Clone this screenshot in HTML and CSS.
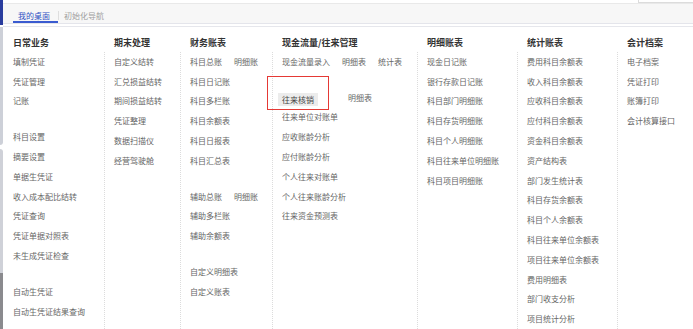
FILE: index.html
```html
<!DOCTYPE html>
<html lang="zh-CN">

<head>
    <meta charset="UTF-8">
    <meta name="viewport" content="width=device-width, initial-scale=1.0">
    <title>我的桌面</title>
    <link rel="stylesheet" href="styles.css">
</head>

<body>
    <div class="page">
        <div class="rail">
            <span class="rail-top"></span>
            <span class="rail-thumb"></span>
            <span class="rail-track"></span>
            <span class="rail-end"></span>
        </div>

        <div class="main">
            <div class="topbar">
                <div class="corner"></div>
            </div>

            <div class="tabs">
                <a class="tab active">我的桌面</a>
                <a class="tab">初始化导航</a>
            </div>
            <div class="rule"></div>

            <div class="board">
                <div class="col first">
                    <h3>日常业务</h3>
                    <div class="list">
                        <div class="group">
                            <a>填制凭证</a>
                            <a>凭证管理</a>
                            <a>记账</a>
                        </div>
                        <div class="group">
                            <a>科目设置</a>
                            <a>摘要设置</a>
                            <a>单据生凭证</a>
                            <a>收入成本配比结转</a>
                            <a>凭证查询</a>
                            <a>凭证单据对照表</a>
                            <a>未生成凭证检查</a>
                        </div>
                        <div class="group">
                            <a>自动生凭证</a>
                            <a>自动生凭证结果查询</a>
                        </div>
                    </div>
                </div>

                <div class="col">
                    <h3>期末处理</h3>
                    <div class="list">
                        <div class="group">
                            <a>自定义结转</a>
                            <a>汇兑损益结转</a>
                            <a>期间损益结转</a>
                            <a>凭证整理</a>
                            <a>数据扫描仪</a>
                            <a>经营驾驶舱</a>
                        </div>
                    </div>
                </div>

                <div class="col">
                    <h3>财务账表</h3>
                    <div class="list">
                        <div class="group">
                            <div class="row"><a>科目总账</a><a>明细账</a></div>
                            <a>科目日记账</a>
                            <a>科目多栏账</a>
                            <a>科目余额表</a>
                            <a>科目日报表</a>
                            <a>科目汇总表</a>
                        </div>
                        <div class="group">
                            <div class="row"><a>辅助总账</a><a>明细账</a></div>
                            <a>辅助多栏账</a>
                            <a>辅助余额表</a>
                        </div>
                        <div class="group">
                            <a>自定义明细表</a>
                            <a>自定义账表</a>
                        </div>
                    </div>
                </div>

                <div class="col">
                    <h3>现金流量/往来管理</h3>
                    <div class="list">
                        <div class="group">
                            <div class="row"><a>现金流量录入</a><a>明细表</a><a>统计表</a></div>
                        </div>
                        <div class="group">
                            <div class="row"><a class="hl">往来核销</a><a>明细表</a></div>
                            <a>往来单位对账单</a>
                            <a>应收账龄分析</a>
                            <a>应付账龄分析</a>
                            <a>个人往来对账单</a>
                            <a>个人往来账龄分析</a>
                            <a>往来资金预测表</a>
                        </div>
                    </div>
                </div>

                <div class="col">
                    <h3>明细账表</h3>
                    <div class="list">
                        <div class="group">
                            <a>现金日记账</a>
                            <a>银行存款日记账</a>
                            <a>科目部门明细账</a>
                            <a>科目存货明细账</a>
                            <a>科目个人明细账</a>
                            <a>科目往来单位明细账</a>
                            <a>科目项目明细账</a>
                        </div>
                    </div>
                </div>

                <div class="col">
                    <h3>统计账表</h3>
                    <div class="list">
                        <div class="group">
                            <a>费用科目余额表</a>
                            <a>收入科目余额表</a>
                            <a>应收科目余额表</a>
                            <a>应付科目余额表</a>
                            <a>资金科目余额表</a>
                            <a>资产结构表</a>
                            <a>部门发生统计表</a>
                            <a>科目存货余额表</a>
                            <a>科目个人余额表</a>
                            <a>科目往来单位余额表</a>
                            <a>项目往来单位余额表</a>
                            <a>费用明细表</a>
                            <a>部门收支分析</a>
                            <a>项目统计分析</a>
                        </div>
                    </div>
                </div>

                <div class="col">
                    <h3>会计档案</h3>
                    <div class="list">
                        <div class="group">
                            <a>电子档案</a>
                            <a>凭证打印</a>
                            <a>账簿打印</a>
                            <a>会计核算接口</a>
                        </div>
                    </div>
                </div>
            </div>
        </div>
    </div>
</body>

</html>
```

FILE: styles.css
```css
html,
body {
    margin: 0;
    padding: 0;
    height: 100%;
    overflow: hidden;
    background-color: #fff;
}

body {
    font-family: "Noto Sans CJK SC", "Noto Sans", sans-serif;
    font-size: 8px;
    color: #666;
}

.page {
    display: flex;
    height: 100vh;
}

/* left scroll rail */
.rail {
    width: 3px;
    display: flex;
    flex-direction: column;
    flex-shrink: 0;
}

.rail-top {
    height: 25px;
    background-color: #2a3d9e;
}

.rail-thumb {
    height: 118px;
    margin-top: 2px;
    background-color: #cdd0d8;
    border-radius: 0 0 3px 0;
}

.rail-track {
    height: 124px;
    margin-top: 4px;
    background-color: #cfd1d8;
    border-radius: 0 3px 0 0;
}

.rail-end {
    flex: 1;
    background-color: #8a8a8e;
}

.main {
    flex: 1;
    display: flex;
    flex-direction: column;
    min-width: 0;
}

.topbar {
    height: 6px;
    display: flex;
}

.corner {
    margin-left: auto;
    width: 54px;
    height: 2px;
    border-left: 1px solid #dcdcdc;
    border-bottom: 1px solid #dcdcdc;
}

/* tabs */
.tabs {
    display: flex;
    height: 19px;
    background-color: #f7f7f7;
    border-top: 1px solid #e9e9e9;
    border-bottom: 1px solid #e4e5eb;
    padding-left: 10px;
}

.tab {
    box-sizing: border-box;
    height: 18px;
    margin-top: 1px;
    padding: 5px 8px 0 5px;
    line-height: 12px;
    color: #a0a0a0;
    cursor: pointer;
}

.tab.active {
    color: #2f50c4;
    border-bottom: 2px solid #3a5bd0;
}

.tab + .tab {
    padding-left: 6px;
    position: relative;
}

.tab + .tab::before {
    content: "";
    position: absolute;
    left: 0;
    top: 6px;
    height: 9px;
    border-left: 1px solid #dedede;
}

.rule {
    height: 2px;
    margin-top: 2px;
    background-color: #e6e7ec;
}

/* menu board */
.board {
    flex: 1;
    display: grid;
    grid-template-columns: 101px 76px 92px 145px 100px 100px 1fr;
    padding-top: 7px;
}

.col {
    display: flex;
    flex-direction: column;
}

.col h3 {
    margin: 0;
    padding-left: 10px;
    font-size: 9px;
    line-height: 18px;
    font-weight: bold;
    color: #333;
}

.list {
    flex: 1;
    border-left: 1px dotted #dcdcdc;
    padding-left: 9px;
}

.col.first .list {
    border-left-color: transparent;
}

.group {
    display: flex;
    flex-direction: column;
    align-items: flex-start;
}

.group + .group {
    margin-top: 16px;
}

.group a,
.row {
    line-height: 19.8px;
    white-space: nowrap;
    cursor: pointer;
}

.row {
    display: flex;
    align-items: center;
    gap: 12px;
}

.hl {
    position: relative;
    line-height: 13px !important;
    padding: 0 4px;
    margin: 4px 18px 0 -4px;
    background-color: #ececec;
    color: #444;
}

.hl::after {
    content: "";
    position: absolute;
    left: -11px;
    top: -17px;
    width: 62px;
    height: 34px;
    box-sizing: border-box;
    border: 1.5px solid #e53935;
}
```
